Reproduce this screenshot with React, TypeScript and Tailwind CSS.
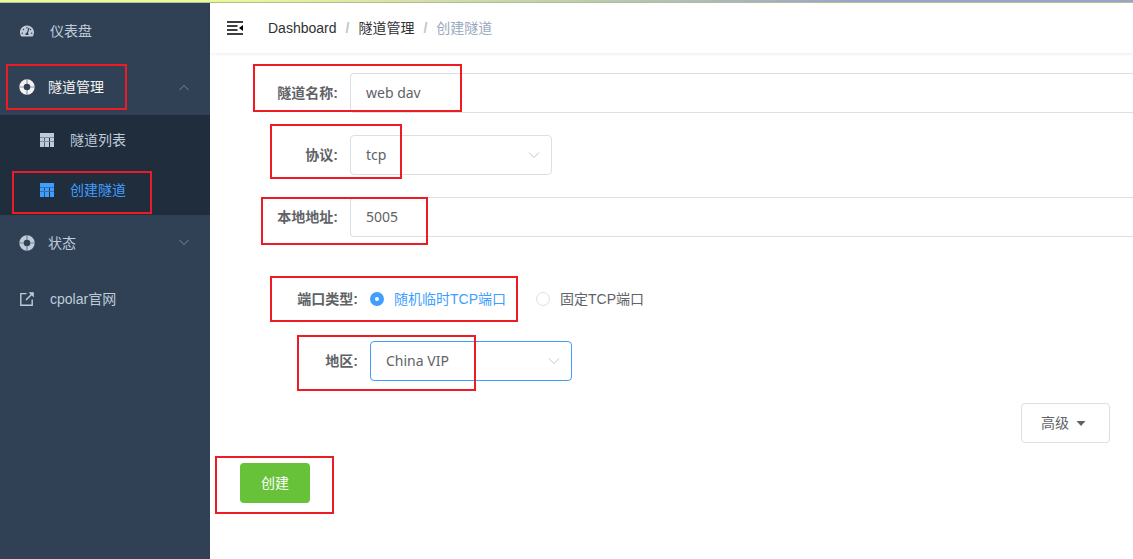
import React, { useState } from 'react';
import { FaTachometerAlt } from 'react-icons/fa';

interface IconProps {
  className?: string;
}

function HelpIcon({ className = '' }: IconProps): React.ReactElement {
  return (
    <svg viewBox="0 0 16 16" className={`shrink-0 ${className}`} fill="none">
      <circle cx="8" cy="8" r="5.5" stroke="currentColor" strokeWidth="4.4" />
      <path
        d="M8 0.4v4.8M8 10.8v4.8M0.4 8h4.8M10.8 8h4.8"
        stroke="#304156"
        strokeOpacity="0.5"
        strokeWidth="1.2"
      />
    </svg>
  );
}

function TableIcon({ className = '' }: IconProps): React.ReactElement {
  return (
    <svg viewBox="0 0 14 14" className={`shrink-0 ${className}`} fill="currentColor">
      <path d="M0 0h14v4H0zM0 5h4v3H0zM5 5h4v3H5zM10 5h4v3h-4zM0 9h4v5H0zM5 9h4v5H5zM10 9h4v5h-4z" />
      <path d="M0 4h14v1H0zM0 8h14v1H0z" fillOpacity="0.6" />
      <path d="M4 5h1v9H4z" fillOpacity="0.35" />
    </svg>
  );
}

function LinkIcon({ className = '' }: IconProps): React.ReactElement {
  return (
    <svg viewBox="0 0 14 14" className={`shrink-0 ${className}`} fill="none" stroke="currentColor">
      <path d="M6.5 1.6H.8v11.6h11.4V7.5" strokeWidth="1.4" />
      <path d="M6 8l6.2-6.2" strokeWidth="1.5" />
      <path d="M8.6 .2H13.8V5.4z" fill="currentColor" stroke="none" />
    </svg>
  );
}

function FoldIcon({ className = '' }: IconProps): React.ReactElement {
  return (
    <svg viewBox="0 0 16 14" className={className} fill="currentColor">
      <path d="M0 .3h16v1.4H0zM0 4.2h10.5v1.5H0zM0 8.2h10.5v1.5H0zM0 12.2h16v1.5H0zM16 4v6l-4-3z" />
    </svg>
  );
}

function Chevron({ className = '' }: IconProps): React.ReactElement {
  return (
    <svg viewBox="0 0 12 12" className={className} fill="none" stroke="currentColor">
      <path d="M1 3.5l5 5 5-5" />
    </svg>
  );
}

/** Thinner and smaller arrow of the sidebar groups */
function MenuArrow({ className = '' }: IconProps): React.ReactElement {
  return (
    <svg
      viewBox="0 0 12 12"
      className={`ml-auto size-3 text-[#7e8894] ${className}`}
      fill="none"
      stroke="currentColor"
    >
      <path d="M1.5 3l4.5 4.5L10.500 3" />
    </svg>
  );
}

/** Red frame laid over the step that needs attention */
function Mark({ className }: { className: string }): React.ReactElement {
  return (
    <span className={`absolute z-10 border-2 border-[#ed1c24] pointer-events-none ${className}`} />
  );
}

function Sidebar(): React.ReactElement {
  return (
    <nav className="w-[210px] shrink-0 bg-[#304156] text-sm text-[#bfcbd9]">
      <a href="#dashboard" className="flex h-14 items-center gap-4 px-5">
        <FaTachometerAlt className="size-3.5 shrink-0" />
        仪表盘
      </a>
      <div className="relative">
        <button className="flex h-14 w-full items-center pl-[19px] pr-5 text-[#f4f4f5]">
          <HelpIcon className="mr-[13px] size-4" />
          隧道管理
          <MenuArrow className="rotate-180" />
        </button>
        <Mark className="left-1.5 top-[5px] h-[46px] w-[121px]" />
      </div>
      <div className="bg-[#1f2d3d]">
        <a href="#list" className="flex h-[50px] items-center gap-4 px-10">
          <TableIcon className="size-3.5" />
          隧道列表
        </a>
        <div className="relative">
          <a href="#create" className="flex h-[50px] items-center gap-4 px-10 text-[#409eff]">
            <TableIcon className="size-3.5" />
            创建隧道
          </a>
          <Mark className="left-3 top-1.5 h-[43px] w-[140px]" />
        </div>
      </div>
      <button className="flex h-14 w-full items-center pl-[19px] pr-5">
        <HelpIcon className="mr-[13px] size-4" />
        状态
        <MenuArrow />
      </button>
      <a href="#site" className="flex h-14 items-center gap-4 px-5">
        <LinkIcon className="size-3.5" />
        cpolar官网
      </a>
    </nav>
  );
}

function Header(): React.ReactElement {
  return (
    <header className="flex h-[50px] items-center bg-white px-[17px] text-sm text-[#303133] shadow-[0_1px_4px_rgba(0,21,41,0.08)]">
      <button aria-label="Toggle sidebar" className="mr-[25px] text-black">
        <FoldIcon className="h-3.5 w-4" />
      </button>
      <nav className="flex items-center gap-[9px]">
        <a href="#dashboard">Dashboard</a>
        <span className="font-bold text-[#c0c4cc]">/</span>
        <a href="#tunnels">隧道管理</a>
        <span className="font-bold text-[#c0c4cc]">/</span>
        <span className="text-[#97a8be]">创建隧道</span>
      </nav>
    </header>
  );
}

interface FieldProps {
  id: string;
  label: string;
  mark: string;
  children: React.ReactNode;
}

function Field({ id, label, mark, children }: FieldProps): React.ReactElement {
  return (
    <div className="relative flex h-10 items-center">
      <label htmlFor={id} className="w-[110px] shrink-0 pr-3 text-right font-bold">
        {label}:
      </label>
      {children}
      <Mark className={mark} />
    </div>
  );
}

interface SelectProps {
  id: string;
  value: string;
  options: string[];
  border: string;
  onChange: (value: string) => void;
}

function Select({ id, value, options, border, onChange }: SelectProps): React.ReactElement {
  return (
    <div className="relative w-[202px]">
      <select
        id={id}
        value={value}
        onChange={(e) => onChange(e.target.value)}
        className={`h-10 w-full appearance-none rounded border bg-white px-[15px] font-['Noto_Sans',sans-serif] outline-none ${border}`}
      >
        {options.map((o) => (
          <option key={o}>{o}</option>
        ))}
      </select>
      <Chevron className="pointer-events-none absolute right-3 top-3.5 size-3 text-[#c0c4cc]" />
    </div>
  );
}

const inputClass =
  "h-10 min-w-0 flex-1 rounded-l border border-r-0 border-[#dcdfe6] bg-white px-[15px] pb-0.5 font-['Noto_Sans',sans-serif] outline-none";

const radioClass =
  'size-3.5 appearance-none rounded-full border border-[#dcdfe6] bg-white checked:border-5 checked:border-[#409eff]';

export default function App(): React.ReactElement {
  const [name, setName] = useState('web dav');
  const [protocol, setProtocol] = useState('tcp');
  const [address, setAddress] = useState('5005');
  const [portType, setPortType] = useState('random');
  const [region, setRegion] = useState('China VIP');

  return (
    <div className="flex min-h-screen flex-col bg-white font-['Liberation_Sans','Noto_Sans_CJK_SC',sans-serif]">
      <div className="h-[3px] border-b border-[#b3c299] bg-linear-to-r from-[#eef99a] from-20% via-[#c3cfae] via-50% to-[#9ba6c7] to-75%" />
      <div className="flex flex-1">
        <Sidebar />
        <div className="min-w-0 flex-1">
          <Header />
          <form
            className="flex flex-col pl-[30px] pt-5 text-sm text-[#606266]"
            onSubmit={(e) => e.preventDefault()}
          >
            <div className="flex flex-col gap-[22px]">
              <Field id="name" label="隧道名称" mark="left-[13px] -top-[9px] h-12 w-[209px]">
                <input
                  id="name"
                  value={name}
                  onChange={(e) => setName(e.target.value)}
                  className={inputClass}
                />
              </Field>
              <Field id="protocol" label="协议" mark="left-[30px] -top-[11px] h-[55px] w-[132px]">
                <Select
                  id="protocol"
                  value={protocol}
                  options={['tcp', 'http', 'tls']}
                  border="border-[#dcdfe6]"
                  onChange={setProtocol}
                />
              </Field>
              <Field id="address" label="本地地址" mark="left-[21px] top-0 h-12 w-[167px]">
                <input
                  id="address"
                  value={address}
                  onChange={(e) => setAddress(e.target.value)}
                  className={inputClass}
                />
              </Field>

              {/* Options that depend on the protocol */}
              <div className="flex flex-col gap-[22px] pl-5 pt-5">
                <Field id="random" label="端口类型" mark="left-2.5 -top-[3px] h-[46px] w-[248px]">
                  <div className="flex items-center gap-[30px]">
                    <label
                      className={`flex items-center gap-2.5 ${portType === 'random' ? 'text-[#409eff]' : ''}`}
                    >
                      <input
                        id="random"
                        type="radio"
                        name="portType"
                        checked={portType === 'random'}
                        onChange={() => setPortType('random')}
                        className={radioClass}
                      />
                      随机临时TCP端口
                    </label>
                    <label
                      className={`flex items-center gap-2.5 ${portType === 'fixed' ? 'text-[#409eff]' : ''}`}
                    >
                      <input
                        type="radio"
                        name="portType"
                        checked={portType === 'fixed'}
                        onChange={() => setPortType('fixed')}
                        className={radioClass}
                      />
                      固定TCP端口
                    </label>
                  </div>
                </Field>
                <Field id="region" label="地区" mark="left-[37px] -top-1.5 h-14 w-[179px]">
                  <Select
                    id="region"
                    value={region}
                    options={['China VIP', 'China', 'United States']}
                    border="border-[#409eff]"
                    onChange={setRegion}
                  />
                </Field>
              </div>

              <div className="flex justify-end pr-[23px]">
                <button
                  type="button"
                  className="flex h-10 items-center gap-1.5 rounded border border-[#dcdfe6] bg-white pl-[19px] pr-[22px]"
                >
                  高级
                  <svg viewBox="0 0 12 12" className="size-3" fill="currentColor">
                    <path d="M1.5 4h9L6 9z" />
                  </svg>
                </button>
              </div>
            </div>

            <div className="relative mt-5 self-start">
              <button type="submit" className="h-10 rounded bg-[#67c23a] px-[21px] text-white">
                创建
              </button>
              <Mark className="-left-[25px] -top-[7px] h-[58px] w-[119px]" />
            </div>
          </form>
        </div>
      </div>
    </div>
  );
}
